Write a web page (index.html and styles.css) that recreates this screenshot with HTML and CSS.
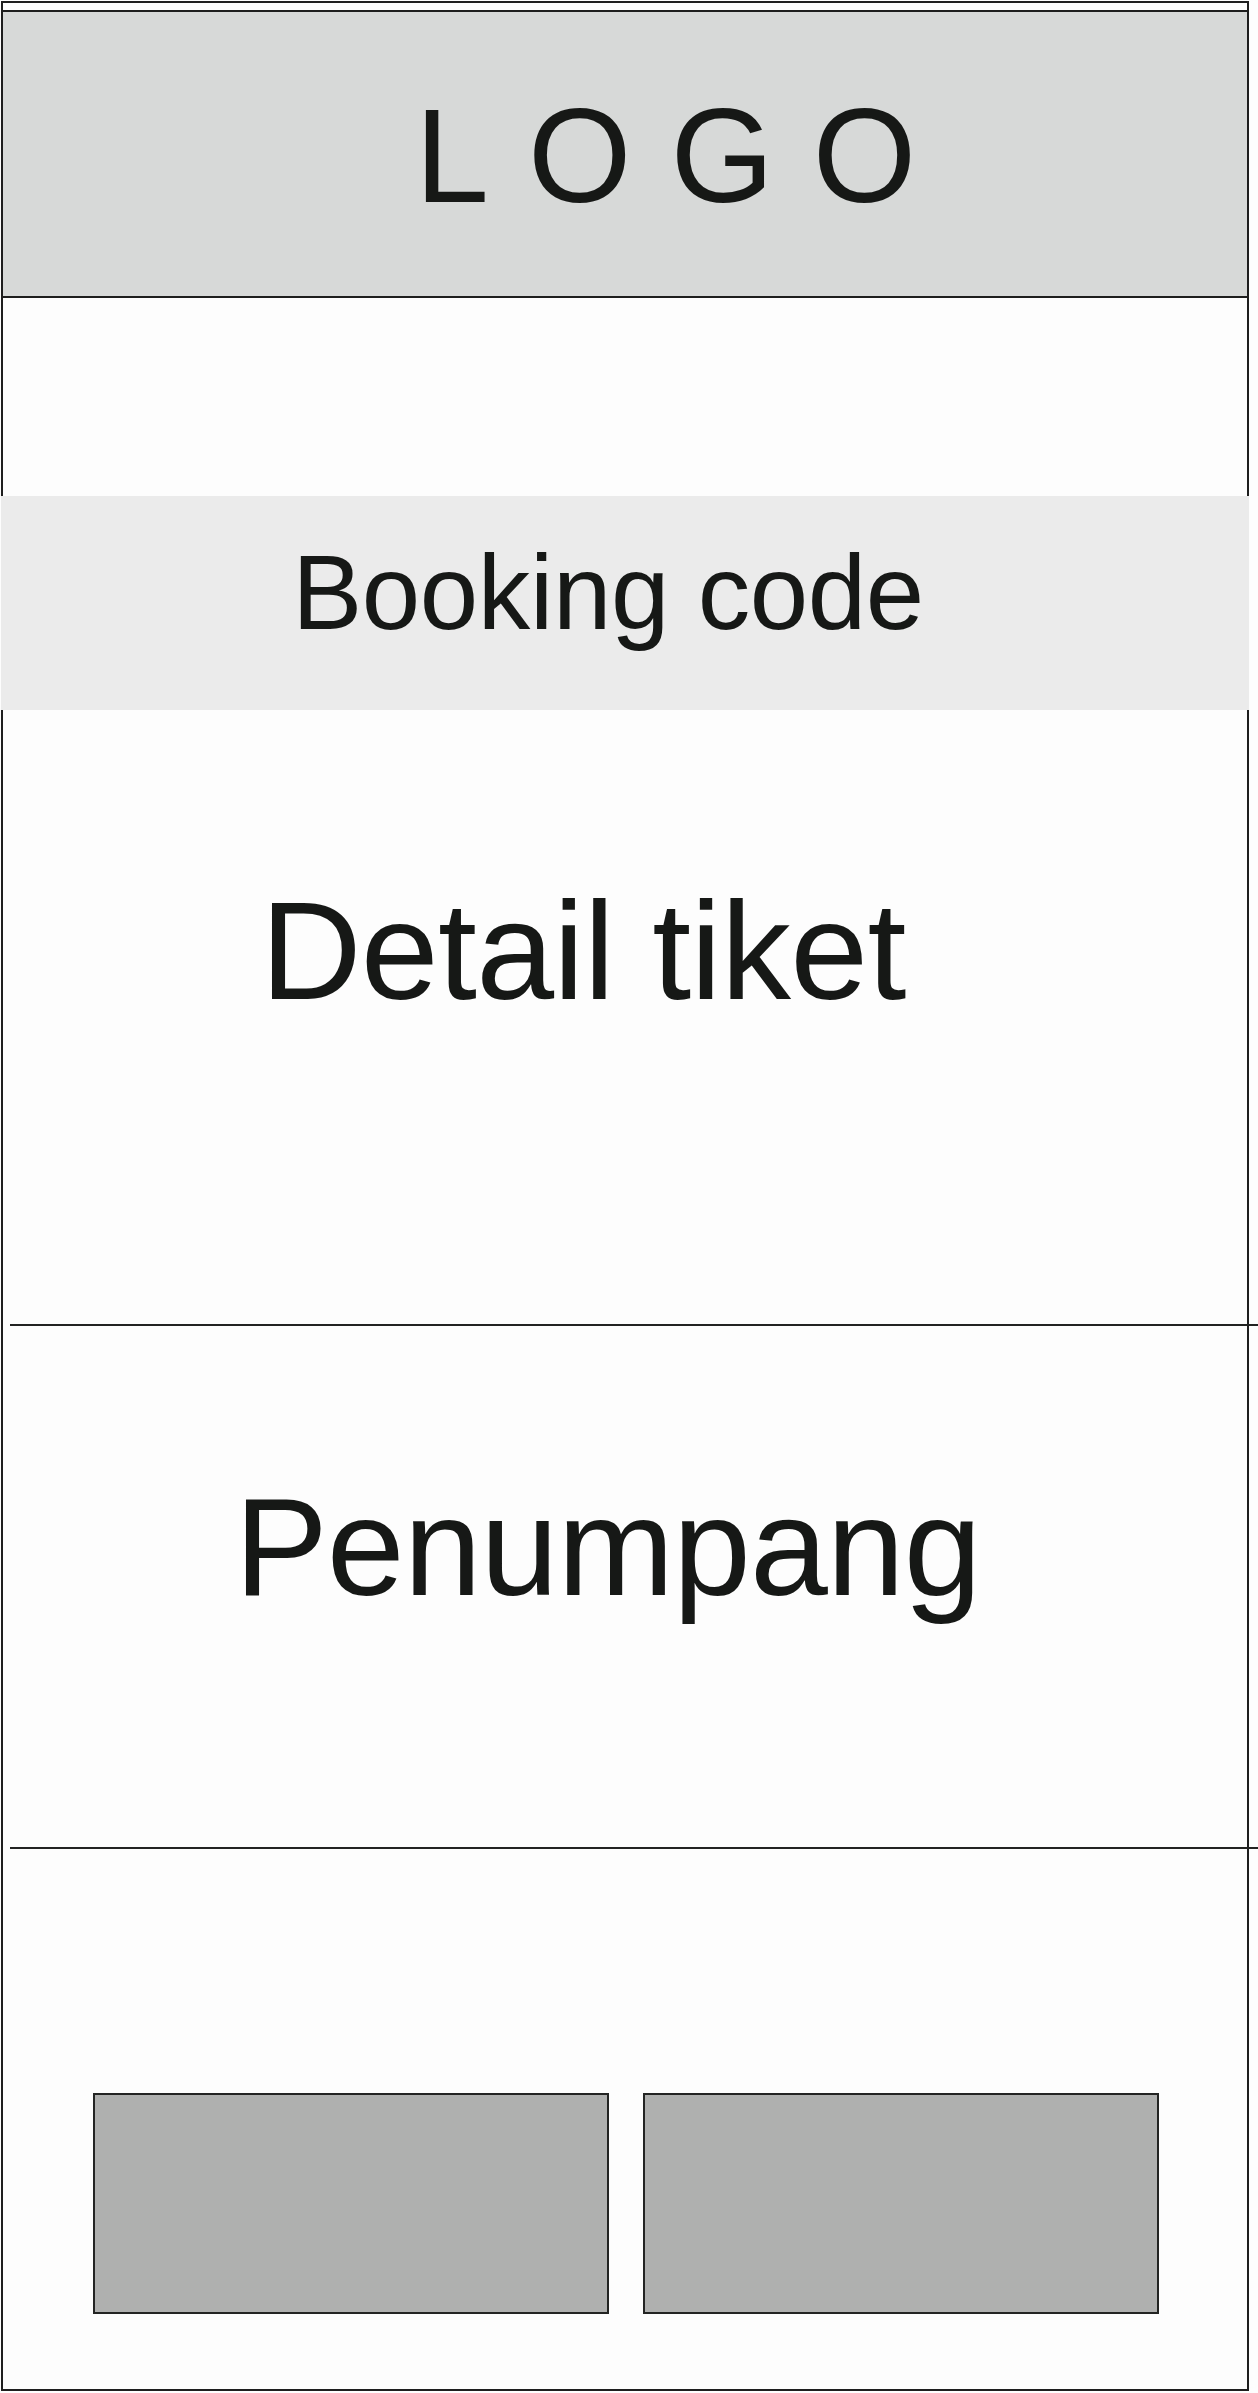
FILE: index.html
```html
<!DOCTYPE html>
<html lang="id">
<head>
<meta charset="utf-8">
<title>Detail tiket</title>
<link rel="stylesheet" href="styles.css">
</head>
<body>
<div class="frame">
  <div class="top-strip"></div>
  <header class="header">
    <div class="logo">LOGO</div>
  </header>
  <div class="spacer"></div>
  <div class="booking">Booking code</div>
  <section class="detail">Detail tiket</section>
  <div class="divider"></div>
  <section class="passenger">Penumpang</section>
  <div class="divider"></div>
  <footer class="actions">
    <div class="btn"></div>
    <div class="btn"></div>
  </footer>
</div>
</body>
</html>
```

FILE: styles.css
```css
* {
  box-sizing: border-box;
}

html, body {
  margin: 0;
  padding: 0;
  background: #fdfdfd;
}

body {
  font-family: "Liberation Sans", Arial, sans-serif;
  color: #161816;
}

.frame {
  margin: 1px 0 0 1px;
  width: 1248px;
  height: 2390px;
  border: 2px solid #1e1e1e;
  display: flex;
  flex-direction: column;
}

.top-strip {
  height: 7px;
  flex: none;
}

.header {
  height: 288px;
  flex: none;
  background: #d7d9d8;
  border-top: 2px solid #1e1e1e;
  border-bottom: 2px solid #1e1e1e;
  padding: 78px 0 0 412px;
}

.logo {
  font-size: 133px;
  line-height: 133px;
  letter-spacing: 39px;
  white-space: nowrap;
}

.spacer {
  height: 198px;
  flex: none;
}

.booking {
  height: 214px;
  flex: none;
  margin: 0 -2px;
  background: #ebebeb;
  padding: 44px 34px 0 0;
  text-align: center;
  font-size: 105px;
  line-height: 105px;
  letter-spacing: -0.4px;
  white-space: nowrap;
}

.detail {
  height: 614px;
  flex: none;
  padding: 171px 84px 0 0;
  text-align: center;
  font-size: 140px;
  line-height: 140px;
  letter-spacing: -0.7px;
  white-space: nowrap;
}

.passenger {
  height: 521px;
  flex: none;
  padding: 151px 35px 0 0;
  text-align: center;
  font-size: 140px;
  line-height: 140px;
  letter-spacing: -1px;
  white-space: nowrap;
}

.divider {
  height: 2px;
  flex: none;
  background: #222322;
  margin: 0 -11px 0 7px;
}

.actions {
  flex: 1;
  display: flex;
  gap: 34px;
  padding: 244px 0 0 90px;
}

.btn {
  width: 516px;
  height: 221px;
  background: #afb0af;
  border: 2px solid #232423;
}
```
